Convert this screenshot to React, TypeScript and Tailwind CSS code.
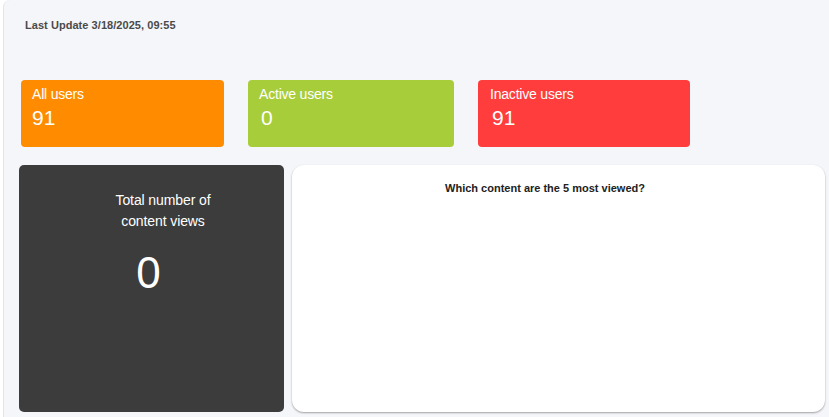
import React from "react";

const cards = [
  { label: "All users", value: "91", bg: "bg-[#ff8c00]", w: "w-[203px]", pl: "pl-[11px]", nudge: "" },
  { label: "Active users", value: "0", bg: "bg-[#a8cd3a]", w: "w-[206px]", pl: "pl-[11px]", nudge: "ml-[2px]" },
  { label: "Inactive users", value: "91", bg: "bg-[#ff3d3d]", w: "w-[212px]", pl: "pl-[12px]", nudge: "ml-[2px]" },
];

export default function App() {
  return (
    <div
      className="h-[417px] w-[829px] overflow-hidden bg-white"
      style={{ fontFamily: '"Liberation Sans", Arial, sans-serif' }}
    >
      <div className="ml-[3px] h-[440px] rounded-tl-[7px] border-l border-[#e3e5ea] bg-[#f5f6fa] pl-[15px]">
        <div className="pl-[6px] pt-[19px] text-[11px] font-bold leading-[13px] tracking-[0.05px] text-[#4a4a4a]">
          Last Update 3/18/2025, 09:55
        </div>

        <div className="mt-[48px] flex gap-[24px] pl-[2px]">
          {cards.map((c) => (
            <div
              key={c.label}
              className={`h-[67px] ${c.w} ${c.bg} rounded-[4px] ${c.pl} pt-[6px] text-white`}
            >
              <div className="text-[14px] leading-[16px] tracking-[-0.2px]">{c.label}</div>
              <div className={`mt-[4px] text-[21px] leading-[24px] ${c.nudge}`}>{c.value}</div>
            </div>
          ))}
        </div>

        <div className="mt-[18px] flex gap-[8px]">
          <div className="flex h-[247px] w-[265px] flex-col items-center rounded-[5px] bg-[#3c3c3c] pt-[25px] text-white">
            <div className="pl-[23px] text-center text-[14px] leading-[21px] tracking-[-0.1px]">
              Total number of
              <br />
              content views
            </div>
            <div className="mt-[19px] pr-[6px] text-[44px] leading-none">0</div>
          </div>
          <div className="h-[247px] w-[533px] rounded-[12px] bg-white pt-[17px] shadow-[0_1px_2px_rgba(0,0,0,0.35)]">
            <div className="pr-[27px] text-center text-[11px] font-bold leading-[13px] text-[#222]">
              Which content are the 5 most viewed?
            </div>
          </div>
        </div>
      </div>
    </div>
  );
}
